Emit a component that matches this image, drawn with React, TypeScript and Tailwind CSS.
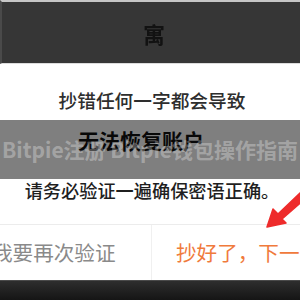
const FONT = '[font-family:"Noto_Sans_CJK_SC","Noto_Sans",sans-serif]'

function Arrow() {
  // red hand-drawn pointer at the right edge, lying over the dialog
  return (
    <svg className="absolute left-0 top-0 pointer-events-none" width={300} height={300} viewBox="0 0 300 300">
      <polygon
        points="267,227 273,209 278,214 301,192 305,199 282,219 286,223"
        fill="#ee2b2b"
        stroke="#ee2b2b"
        strokeWidth={1.5}
        strokeLinejoin="round"
      />
    </svg>
  )
}

export default function App() {
  return (
    <div className={`relative w-[300px] h-[300px] overflow-hidden bg-white ${FONT}`}>
      <div className="h-[64px] border-t-2 border-[#c6c6c6] border-b border-b-[#dcdcdc] border-l-2 border-l-[#4a4a4a] bg-[#363636] flex items-center justify-center">
        <span className="text-[22px] leading-none text-[#121212] pl-[6px] font-semibold blur-[0.4px]">寓</span>
      </div>

      <div className="flex flex-col items-center">
        <div className="mt-[23px] h-[26px] leading-[26px] text-[18.7px] text-[#2e2e2e] font-medium whitespace-nowrap pl-[4px]">
          抄错任何一字都会导致
        </div>
        <div className="mt-[15px] h-[28px] leading-[28px] text-[21px] text-[#111] font-bold whitespace-nowrap -translate-y-[2px] pr-[18px]">
          无法恢复账户
        </div>
        <div className="mt-[21px] h-[26px] leading-[26px] text-[18.2px] text-[#1f1f1f] font-medium whitespace-nowrap pl-[4px]">
          请务必验证一遍确保密语正确。
        </div>
      </div>

      <div className="mt-[21px] h-[56px] border-t border-[#ececec] flex">
        <div className="w-[152px] border-r border-[#f0f0f0] flex items-center overflow-hidden">
          <span className="-ml-[8px] text-[20.6px] text-[#8a8a8a] whitespace-nowrap">我要再次验证</span>
        </div>
        <div className="flex-1 flex items-center overflow-hidden">
          <span className="ml-[24px] text-[20.6px] text-[#f07a3c] whitespace-nowrap">抄好了，下一步</span>
        </div>
      </div>

      <div className="h-[20px] border-t border-[#4a4a4a] bg-gradient-to-b from-[#2e2e2e] to-[#151515]"></div>

      <div className="absolute left-0 right-0 top-[120px] h-[59px] bg-black/50 flex items-center justify-center">
        <span className="text-[21px] font-bold text-white/30 whitespace-nowrap">Bitpie注册 Bitpie钱包操作指南</span>
      </div>

      <Arrow />
    </div>
  )
}
